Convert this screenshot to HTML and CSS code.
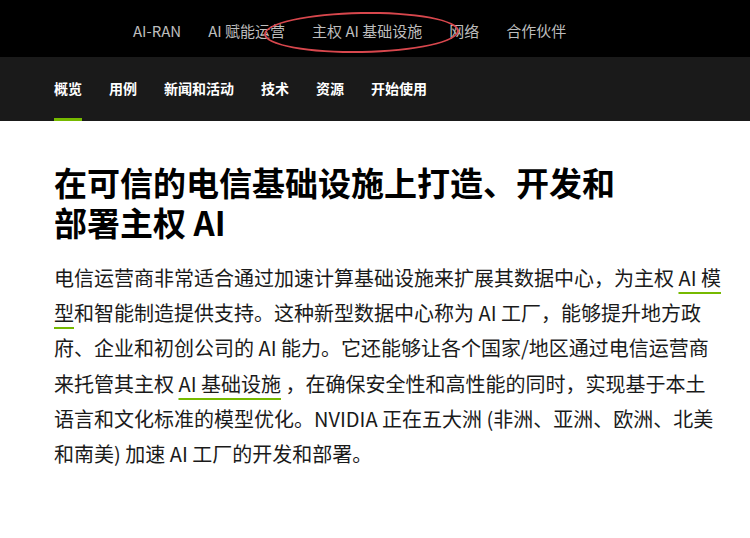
FILE: index.html
```html
<!DOCTYPE html>
<html lang="zh-CN">
<head>
<meta charset="utf-8">
<link rel="stylesheet" href="styles.css">
</head>
<body>
<header class="topbar">
  <nav class="topnav">
    <a>AI-RAN</a>
    <a>AI 赋能运营</a>
    <a>主权 AI 基础设施</a>
    <a>网络</a>
    <a>合作伙伴</a>
  </nav>
  <div class="circle"></div>
</header>
<nav class="subnav">
  <a class="active">概览</a>
  <a>用例</a>
  <a>新闻和活动</a>
  <a>技术</a>
  <a>资源</a>
  <a>开始使用</a>
</nav>
<main class="content">
  <h1>在可信的电信基础设施上打造、开发和<br>部署主权 AI</h1>
  <p>电信运营商非常适合通过加速计算基础设施来扩展其数据中心，为主权 <a class="link">AI 模型</a>和智能制造提供支持。这种新型数据中心称为 AI 工厂，能够提升地方政府、企业和初创公司的 AI 能力。它还能够让各个国家/地区通过电信运营商来托管其主权 <a class="link">AI 基础设施</a> ，在确保安全性和高性能的同时，实现基于本土语言和文化标准的模型优化。NVIDIA 正在五大洲 (非洲、亚洲、欧洲、北美和南美) 加速 AI 工厂的开发和部署。</p>
</main>
</body>
</html>
```
FILE: styles.css
```css
* { box-sizing: border-box; }
body {
  margin: 0;
  background: #fff;
  font-family: "Noto Sans CJK SC", "Noto Sans", sans-serif;
}
.topbar {
  position: relative;
  height: 57px;
  background: #000;
}
.topnav {
  display: flex;
  gap: 27px;
  padding: 19px 0 0 133px;
  font-size: 15px;
  line-height: 24px;
  color: #bdbdbd;
}
.circle {
  position: absolute;
  left: 264px;
  top: 12px;
  width: 195px;
  height: 41px;
  border: 2px solid #d8474d;
  border-radius: 50%;
  transform: rotate(-1deg);
}
.subnav {
  display: flex;
  gap: 27px;
  height: 64px;
  padding-left: 54px;
  background: #1a1a1a;
  font-size: 14px;
  font-weight: 700;
  color: #fff;
}
.subnav a {
  display: flex;
  align-items: center;
  border-bottom: 3px solid transparent;
  padding-top: 1px;
}
.subnav a.active { border-bottom-color: #76b900; }
.content {
  padding: 41px 27px 0 54px;
}
h1 {
  margin: 0 0 18px;
  font-size: 33px;
  line-height: 40px;
  font-weight: 700;
  color: #000;
}
p {
  margin: 0;
  font-size: 20px;
  line-height: 35.2px;
  color: #1a1a1a;
}
.link {
  text-decoration: underline;
  text-decoration-color: #76b900;
  text-decoration-thickness: 2px;
  text-underline-offset: 6px;
}
```
